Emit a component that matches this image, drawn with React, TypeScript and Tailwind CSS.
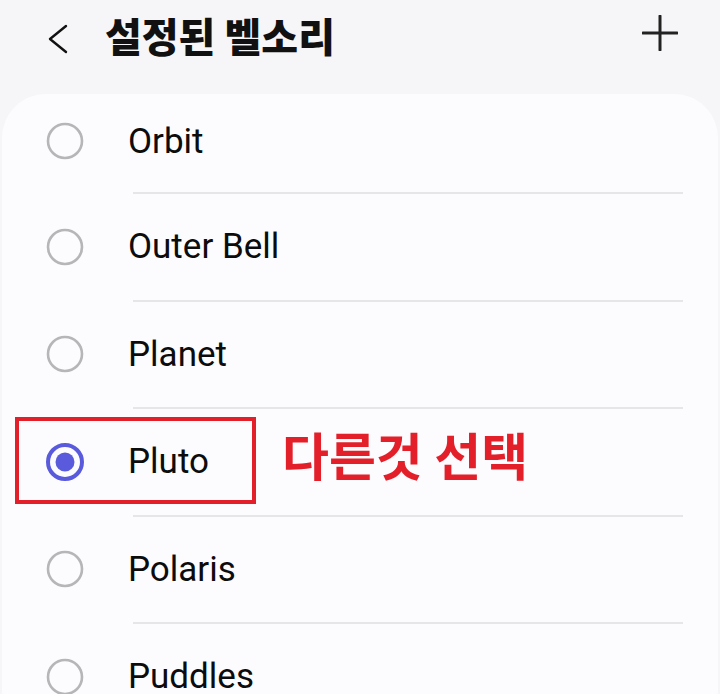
const tones = ["Orbit", "Outer Bell", "Planet", "Pluto", "Polaris", "Puddles"];
const selected = "Pluto";

export default function App() {
  return (
    <div className="relative h-[694px] w-[720px] overflow-hidden bg-[#f6f6f8] font-['Roboto','Noto_Sans_CJK_KR',sans-serif]">
      <header className="flex h-[94px] items-start pt-[12px]">
        <div className="flex h-[48px] w-full items-center">
          <svg className="ml-[47px] mt-[6px]" width="22" height="30" viewBox="0 0 22 30">
            <path d="M19 2 L3 15 L19 28" fill="none" stroke="#111" strokeWidth="2.4" strokeLinecap="round" strokeLinejoin="round" />
          </svg>
          <h1 className="ml-[36px] -mt-[2px] text-[40px] font-black leading-none tracking-[0px] text-[#111] font-['Noto_Sans_CJK_KR',sans-serif]">
            설정된 벨소리
          </h1>
          <svg className="ml-auto mr-[42px] -mt-[6px]" width="36" height="36" viewBox="0 0 36 36">
            <path d="M18 1v34M1 18h34" stroke="#222" strokeWidth="3" strokeLinecap="round" />
          </svg>
        </div>
      </header>

      <div className="mx-[2px] rounded-t-[44px] bg-[#fcfcfe]">
        {tones.map((name, i) => (
          <div key={name}>
            {i > 0 && <div className="ml-[131px] mr-[35px] h-[2px] bg-[#e6e6e9]" />}
            <div className={`flex items-center ${i === 0 ? "h-[98px] pb-[4px]" : "h-[105.5px]"}`}>
              <Radio on={name === selected} />
              <span className="ml-[43px] text-[35px] leading-none text-[#0c0c0c]">{name}</span>
            </div>
          </div>
        ))}
      </div>

      {/* annotation */}
      <div className="absolute left-[15px] top-[417px] h-[87px] w-[241px] border-[4px] border-[#e3202a]" />
      <div className="absolute left-[282px] top-[429px] text-[51px] font-bold leading-none text-[#e3202a] font-['Noto_Sans_CJK_KR',sans-serif]">
        다른것 선택
      </div>
    </div>
  );
}

function Radio({ on }: { on: boolean }) {
  return (
    <svg className="ml-[43px]" width="40" height="40" viewBox="0 0 40 40">
      {on ? (
        <>
          <circle cx="20" cy="20" r="17" fill="none" stroke="#5a5bdc" strokeWidth="4" />
          <circle cx="20" cy="20" r="9.5" fill="#5a5bdc" />
        </>
      ) : (
        <circle cx="20" cy="20" r="17" fill="none" stroke="#b6b6b8" strokeWidth="2.6" />
      )}
    </svg>
  );
}
